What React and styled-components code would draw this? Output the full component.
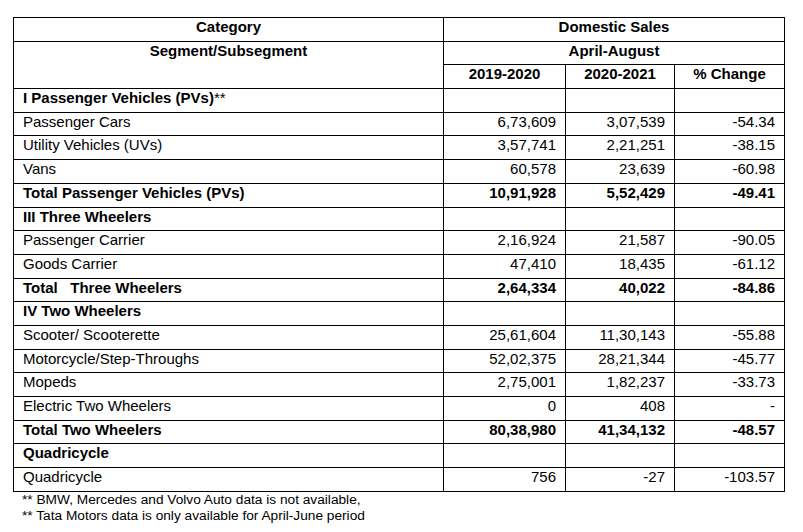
import React from "react";
import styled, { createGlobalStyle } from "styled-components";

const GlobalStyle = createGlobalStyle`
  html, body {
    margin: 0;
    padding: 0;
    background: #ffffff;
  }
  body {
    font-family: "Liberation Sans", Arial, sans-serif;
    color: #000;
  }
`;

const Page = styled.div`
  padding: 17px 0 0 13px;
  width: 790px;
`;

const Table = styled.table`
  border-collapse: collapse;
  table-layout: fixed;
  width: 771px;
  font-family: "Liberation Sans", Arial, sans-serif;
  font-size: 15px;
  color: #000;
`;

const Cell = styled.td`
  border: 1px solid #000;
  height: 23.7px;
  padding: 0 9px 0 9px;
  line-height: 18px;
  vertical-align: top;
  white-space: pre;
  overflow: hidden;
  box-sizing: border-box;
  font-weight: ${(p) => (p.$bold ? 700 : 400)};
  text-align: ${(p) => p.$align || "left"};
`;

const HeadCell = styled(Cell).attrs({ as: "th" })`
  font-weight: 700;
  text-align: center;
`;

const Light = styled.span`
  font-weight: 400;
`;

const Notes = styled.div`
  font-family: "Liberation Sans", Arial, sans-serif;
  font-size: 13.7px;
  line-height: 16px;
  padding: 0 0 0 9px;
  color: #000;
`;

const rows = [
  { type: "section", label: "I Passenger Vehicles (PVs)", suffix: "**" },
  { label: "Passenger Cars", a: "6,73,609", b: "3,07,539", c: "-54.34" },
  { label: "Utility Vehicles (UVs)", a: "3,57,741", b: "2,21,251", c: "-38.15" },
  { label: "Vans", a: "60,578", b: "23,639", c: "-60.98" },
  { label: "Total Passenger Vehicles (PVs)", a: "10,91,928", b: "5,52,429", c: "-49.41", bold: true },
  { type: "section", label: "III Three Wheelers" },
  { label: "Passenger Carrier", a: "2,16,924", b: "21,587", c: "-90.05" },
  { label: "Goods Carrier", a: "47,410", b: "18,435", c: "-61.12" },
  { label: "Total   Three Wheelers", a: "2,64,334", b: "40,022", c: "-84.86", bold: true },
  { type: "section", label: "IV Two Wheelers" },
  { label: "Scooter/ Scooterette", a: "25,61,604", b: "11,30,143", c: "-55.88" },
  { label: "Motorcycle/Step-Throughs", a: "52,02,375", b: "28,21,344", c: "-45.77" },
  { label: "Mopeds", a: "2,75,001", b: "1,82,237", c: "-33.73" },
  { label: "Electric Two Wheelers", a: "0", b: "408", c: "-" },
  { label: "Total Two Wheelers", a: "80,38,980", b: "41,34,132", c: "-48.57", bold: true },
  { type: "section", label: "Quadricycle" },
  { label: "Quadricycle", a: "756", b: "-27", c: "-103.57" },
];

export default function App() {
  return (
    <>
      <GlobalStyle />
      <Page>
        <Table>
          <colgroup>
            <col style={{ width: "430px" }} />
            <col style={{ width: "122px" }} />
            <col style={{ width: "109px" }} />
            <col style={{ width: "110px" }} />
          </colgroup>
          <thead>
            <tr>
              <HeadCell>Category</HeadCell>
              <HeadCell colSpan={3}>Domestic Sales</HeadCell>
            </tr>
            <tr>
              <HeadCell rowSpan={2}>Segment/Subsegment</HeadCell>
              <HeadCell colSpan={3}>April-August</HeadCell>
            </tr>
            <tr>
              <HeadCell>2019-2020</HeadCell>
              <HeadCell>2020-2021</HeadCell>
              <HeadCell>% Change</HeadCell>
            </tr>
          </thead>
          <tbody>
            {rows.map((r, i) =>
              r.type === "section" ? (
                <tr key={i}>
                  <Cell $bold>
                    {r.label}
                    {r.suffix && <Light>{r.suffix}</Light>}
                  </Cell>
                  <Cell />
                  <Cell />
                  <Cell />
                </tr>
              ) : (
                <tr key={i}>
                  <Cell $bold={r.bold}>{r.label}</Cell>
                  <Cell $bold={r.bold} $align="right">{r.a}</Cell>
                  <Cell $bold={r.bold} $align="right">{r.b}</Cell>
                  <Cell $bold={r.bold} $align="right">{r.c}</Cell>
                </tr>
              )
            )}
          </tbody>
        </Table>
        <Notes>
          <div>** BMW, Mercedes and Volvo Auto data is not available,</div>
          <div>** Tata Motors data is only available for April-June period</div>
        </Notes>
      </Page>
    </>
  );
}
